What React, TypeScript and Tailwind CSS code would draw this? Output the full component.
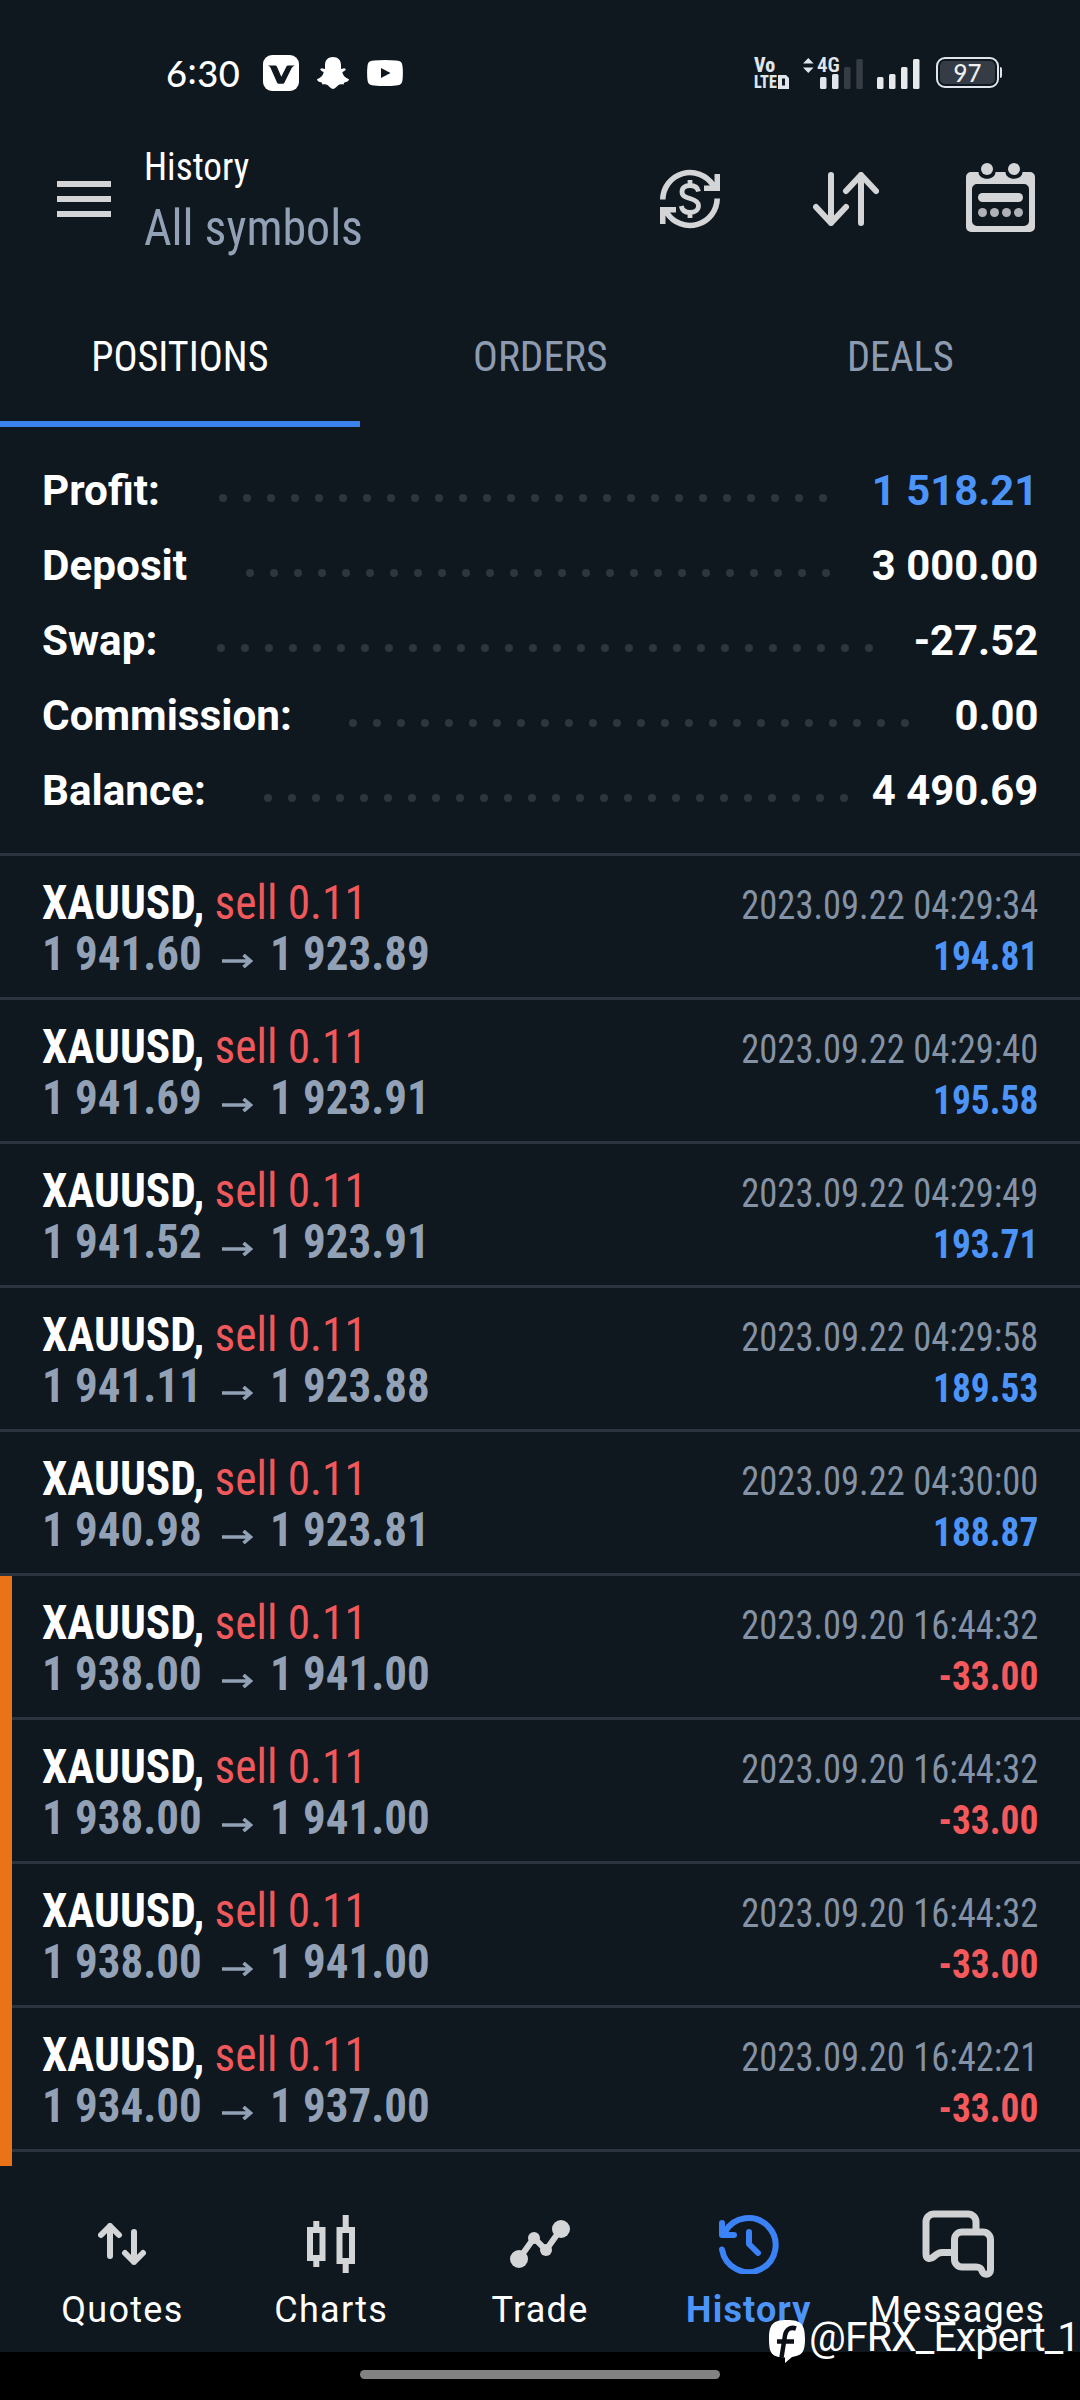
import React from "react";

type Trade = { open: string; close: string; time: string; profit: string };

const summary = [
  { label: "Profit:", value: "1 518.21", dots: 26, labelWidth: "w-[177px]", blue: true },
  { label: "Deposit", value: "3 000.00", dots: 25, labelWidth: "w-[204px]" },
  { label: "Swap:", value: "-27.52", dots: 28, labelWidth: "w-[175px]" },
  { label: "Commission:", value: "0.00", dots: 24, labelWidth: "w-[307px]" },
  { label: "Balance:", value: "4 490.69", dots: 25, labelWidth: "w-[222px]" },
];

const recent: Trade[] = [
  { open: "1 941.60", close: "1 923.89", time: "2023.09.22 04:29:34", profit: "194.81" },
  { open: "1 941.69", close: "1 923.91", time: "2023.09.22 04:29:40", profit: "195.58" },
  { open: "1 941.52", close: "1 923.91", time: "2023.09.22 04:29:49", profit: "193.71" },
  { open: "1 941.11", close: "1 923.88", time: "2023.09.22 04:29:58", profit: "189.53" },
  { open: "1 940.98", close: "1 923.81", time: "2023.09.22 04:30:00", profit: "188.87" },
];

const marked: Trade[] = [
  { open: "1 938.00", close: "1 941.00", time: "2023.09.20 16:44:32", profit: "-33.00" },
  { open: "1 938.00", close: "1 941.00", time: "2023.09.20 16:44:32", profit: "-33.00" },
  { open: "1 938.00", close: "1 941.00", time: "2023.09.20 16:44:32", profit: "-33.00" },
  { open: "1 934.00", close: "1 937.00", time: "2023.09.20 16:42:21", profit: "-33.00" },
];

function StatusBar() {
  return (
    <div className="flex h-[142px] items-center pt-[3px] pl-[166px] text-white">
      <span className="w-[97px] origin-left scale-x-[0.980] font-['Lato'] text-[37px] leading-none font-medium tracking-[0.5px]">
        6<span className="inline-block -translate-y-[3px]">:</span>30
      </span>
      <svg width="36" height="36" viewBox="0 0 36 36">
        <rect width="36" height="36" rx="9" fill="#fff" />
        <path d="M5 10.5h7c1 0 1.500.3 2 1.300l4.300 10 5-10c.5-1 1-1.300 2-1.300H32c-1.500.4-2.500 1.300-3.300 2.600L21.500 27.500c-.4.9-1 1.300-2 1.300h-3.500c-1 0-1.500-.4-2-1.300L7.600 13C7 11.700 6.200 10.900 5 10.500z" fill="#0f171f" />
      </svg>
      <svg className="ml-[18px]" width="32" height="32" viewBox="0 0 32 32" fill="#fff">
        <path d="M16 0c5 0 8 3.200 8 8v4l3.200-.8 1.600.8c0 1.500-1.800 2.200-3.500 3 .6 3.500 3 5.800 6.700 7.200-.2 2.200-2.200 2.800-4.700 3.200l-.8 2.100c-2-.3-3.800-.3-5 .6C19.700 29.600 18 32 16 32s-3.700-2.400-5.500-3.900c-1.200-.9-3-.9-5-.6l-.8-2.100C2.200 25 .2 24.400 0 22.200c3.700-1.400 6.100-3.700 6.700-7.200-1.700-.8-3.500-1.500-3.500-3l1.600-.8 3.200.8V8c0-4.800 3-8 8-8z" />
      </svg>
      <svg className="ml-[18px]" width="36" height="26" viewBox="0 0 36 26">
        <path d="M7 .6Q18-.5 29 .6C34 1 35 2.500 35.500 6Q36.300 13 35.500 20C35 23.500 34 25 29 25.400Q18 26.500 7 25.400C2 25 1 23.500.5 20Q-.3 13 .5 6C1 2.500 2 1 7 .6z" fill="#fff" />
        <path d="M14 8l9.500 5-9.500 5z" fill="#0f171f" />
      </svg>

      <div className="ml-[351px] flex h-[30px] w-[36px] flex-col text-[#dfe5ea]">
        <span className="h-[16px] font-[Roboto] text-[20px] leading-[15px] font-extrabold font-stretch-75%">Vo</span>
        <span className="flex h-[14px] items-start">
          <span className="w-[24px] origin-left scale-x-85 font-[Roboto] text-[19px] leading-[16px] font-extrabold font-stretch-75%">LTE</span>
          <svg className="mt-px shrink-0" width="11" height="14" viewBox="0 0 11 14">
            <path d="M0 0H8L11 3V14H0zM4 3.500V10.500H7V3.500z" fill="currentColor" fillRule="evenodd" />
          </svg>
        </span>
      </div>
      <div className="relative ml-[13px] h-[34px] w-[61px]">
        <svg width="61" height="34" viewBox="0 0 61 34" fill="#dfe5ea">
          <path d="M0 7.500L5.300 2L10.600 7.500zM0 11.500L5.300 17L10.600 11.500z" />
          <rect x="17" y="21" width="6.500" height="12" rx="1.500" />
          <rect x="29" y="18" width="6.500" height="15" rx="1.500" />
          <rect x="41" y="11" width="6.500" height="22" rx="1.500" fill="#353c44" />
          <rect x="53.300" y="3" width="6.500" height="30" rx="1.500" fill="#353c44" />
        </svg>
        <span className="absolute top-0 left-[14px] font-[Roboto] text-[21px] leading-[18px] font-semibold font-stretch-75% text-[#dfe5ea]">4G</span>
      </div>
      <svg className="ml-[13px]" width="44" height="34" viewBox="0 0 44 34" fill="#e6e8ea">
        <rect x="0" y="21" width="6.500" height="12" rx="1.500" />
        <rect x="12" y="18" width="6.500" height="15" rx="1.500" />
        <rect x="24" y="11" width="6.500" height="22" rx="1.500" />
        <rect x="36" y="3" width="6.500" height="30" rx="1.500" />
      </svg>
      <div className="ml-[15px] flex h-[31px] w-[63px] rounded-[9px] border-2 border-[#dfe5ea] p-[2px]">
        <div className="flex flex-1 items-center justify-center rounded-[5px] bg-[#353c46] font-['Lato'] text-[24px] leading-none font-medium text-[#eef0f2]">97</div>
      </div>
      <div className="ml-[1px] h-[11px] w-[2px] rounded-r bg-[#dfe5ea]" />
    </div>
  );
}

function Header() {
  return (
    <header className="flex h-[116px] items-start">
      <div className="mt-[39px] ml-[57px] flex w-[54px] flex-col gap-[9px]">
        <div className="h-[6px] bg-[#d2d4d6]" />
        <div className="h-[6px] bg-[#d2d4d6]" />
        <div className="h-[6px] bg-[#d2d4d6]" />
      </div>
      <div className="ml-[33px] w-[516px] font-stretch-75%">
        <h1 className="h-[56px] origin-left scale-x-[0.955] text-[39px] leading-[50px] font-normal text-white">History</h1>
        <p className="h-[60px] origin-left scale-x-[0.958] text-[50px] leading-[60px] text-[#92a1b5]">All symbols</p>
      </div>
      <svg className="mt-[27px]" width="60" height="60" viewBox="0 0 60 60" fill="none" stroke="#d4d5d6">
        <path d="M2.800 30.500A27.300 27.300 0 0 1 53 16" strokeWidth="5.600" />
        <path d="M57.200 29.500A27.300 27.300 0 0 1 7 44" strokeWidth="5.600" />
        <path d="M60 5v17H44v-5.500h6L54.500 13V5zM0 55V38h16v5.500h-6L5.500 47v8z" fill="#d4d5d6" stroke="none" />
        <path d="M38.500 22.500c-.8-3.800-4-6-8.500-6-5 0-8 2.500-8 6.200 0 4.400 3.500 5.600 8 6.800s8.500 2.700 8.500 7.300c0 4-3.500 6.700-8.500 6.700s-8-2.300-8.700-6.500M30 11v5M30 43.500v5.500" strokeWidth="4.800" />
      </svg>
      <svg className="mt-[30px] ml-[93px]" width="66" height="54" viewBox="0 0 66 54" fill="none" stroke="#d4d5d6" strokeWidth="6" strokeLinecap="round" strokeLinejoin="round">
        <path d="M18 3v48M3 35l15 16L33 35M48 51V3M33 19L48 3l15 16" />
      </svg>
      <svg className="mt-[21px] ml-[87px]" width="69" height="69" viewBox="0 0 69 69" fill="#d4d5d6">
        <path d="M5 9h7.500c0 9 17 9 17 0h10c0 9 17 9 17 0H64a5 5 0 0 1 5 5v50a5 5 0 0 1-5 5H5a5 5 0 0 1-5-5V14a5 5 0 0 1 5-5zM11 21a5 5 0 0 0-5 5v32a5 5 0 0 0 5 5h47a5 5 0 0 0 5-5V26a5 5 0 0 0-5-5z" fillRule="evenodd" />
        <circle cx="21" cy="6" r="6" />
        <circle cx="48" cy="6" r="6" />
        <rect x="12" y="30" width="45" height="9" rx="4.500" />
        <g fill="#aeb2b6">
          <circle cx="16.500" cy="49.500" r="4.500" />
          <circle cx="28.500" cy="49.500" r="4.500" />
          <circle cx="40.500" cy="49.500" r="4.500" />
          <circle cx="52.500" cy="49.500" r="4.500" />
        </g>
      </svg>
    </header>
  );
}

function Tabs() {
  return (
    <nav className="grid h-[169px] grid-cols-3 text-center text-[42px] leading-[50px] font-stretch-75% text-[#8d9bb0]">
      <div className="border-b-[6px] border-[#3b82ec] pt-[74px] text-white">
        <span className="inline-block scale-x-[0.955]">POSITIONS</span>
      </div>
      <div className="pt-[74px]">
        <span className="inline-block scale-x-[0.985]">ORDERS</span>
      </div>
      <div className="pt-[74px]">
        <span className="inline-block scale-x-[0.965]">DEALS</span>
      </div>
    </nav>
  );
}

function Summary() {
  return (
    <section className="border-b-[3px] border-[#2c343f] pt-[26px] pr-[42px] pb-[25px] pl-[42px]">
      {summary.map((s) => (
        <div key={s.label} className="flex h-[75px] items-center text-[42px] leading-[50px] font-bold text-white">
          <span className={s.labelWidth}>
            <span className="inline-block origin-left scale-x-[1.006]">{s.label}</span>
          </span>
          <span className="mt-[15px] flex gap-4">
            {Array.from({ length: s.dots }, (_, i) => (
              <i key={i} className="size-2 rounded-full bg-[#2d353f]" />
            ))}
          </span>
          <span
            className={
              s.blue ? "ml-auto origin-right scale-x-[0.995] text-[#4c94f8]" : "ml-auto origin-right scale-x-[0.995]"
            }
          >
            {s.value}
          </span>
        </div>
      ))}
    </section>
  );
}

function Row({ t }: { t: Trade }) {
  const loss = t.profit.startsWith("-");
  return (
    <div className="flex h-[144px] justify-between border-b-[3px] border-[#2c343f] pr-[42px] font-stretch-75%">
      <div className="pt-[21px] text-[48px] leading-[51px]">
        <div className="origin-left scale-x-[0.944] text-[#f0595c]">
          <b className="text-white">XAUUSD,</b> sell 0.11
        </div>
        <div className="flex items-center font-bold text-[#92a1b5]">
          <span className="w-[180px] origin-left scale-x-[0.937]">{t.open}</span>
          <svg className="mt-[14px] mr-[17px]" width="31" height="14" viewBox="0 0 31 14" fill="none" stroke="currentColor" strokeWidth="3.600">
            <path d="M0 7h29M21.500 1l7 6L21.500 13" />
          </svg>
          <span className="origin-left scale-x-[0.937]">{t.close}</span>
        </div>
      </div>
      <div className="pt-[24px] text-right text-[40px] leading-[51px]">
        <div className="origin-right scale-x-[0.913] text-[#8492a5]">{t.time}</div>
        <div
          className={
            loss
              ? "origin-right scale-x-[0.935] font-bold text-[#f4595c]"
              : "origin-right scale-x-[0.935] font-bold text-[#4c94f8]"
          }
        >
          {t.profit}
        </div>
      </div>
    </div>
  );
}

function NavItem({ label, active, children }: { label: string; active?: boolean; children: React.ReactNode }) {
  return (
    <div className="flex flex-col items-center">
      <div className="flex h-[72px] items-center justify-center">{children}</div>
      <span
        className={
          active
            ? "mt-[10px] text-[36px] leading-[40px] font-bold tracking-[1.2px] text-[#4c94f8] font-stretch-90%"
            : "mt-[10px] text-[36px] leading-[40px] tracking-[1.3px] text-white font-stretch-90%"
        }
      >
        {label}
      </span>
    </div>
  );
}

function BottomNav() {
  return (
    <nav className="grid h-[186px] grid-cols-5 px-[18px] pt-[42px]">
      <NavItem label="Quotes">
        <svg width="48" height="42" viewBox="0 0 48 42" fill="none" stroke="#d4d5d6" strokeWidth="6" strokeLinecap="round" strokeLinejoin="round">
          <path d="M12 33V3M3 12l9-9 9 9M36 9v30M27 30l9 9 9-9" />
        </svg>
      </NavItem>
      <NavItem label="Charts">
        <svg width="48" height="58" viewBox="0 0 48 58" fill="none" stroke="#d4d5d6" strokeWidth="6">
          <path d="M3 15h12.500v28H3zM9.300 6v8M9.300 44v8M32.500 15H45v31H32.500zM38.700 0v14M38.700 46v12" />
        </svg>
      </NavItem>
      <NavItem label="Trade">
        <svg width="60" height="48" viewBox="0 0 60 48" fill="#d4d5d6">
          <path d="M9 39L24 18l12 12L51 9" fill="none" stroke="#d4d5d6" strokeWidth="6" />
          <circle cx="9" cy="39" r="9" />
          <circle cx="24" cy="18" r="6" />
          <circle cx="36" cy="30" r="6" />
          <circle cx="51" cy="9" r="9" />
        </svg>
      </NavItem>
      <NavItem label="History" active>
        <svg width="60" height="60" viewBox="0 0 60 60" fill="none" stroke="#3b82f6" strokeWidth="6" strokeLinecap="round" strokeLinejoin="round">
          <path d="M3 35.500A27 27 0 1 0 6 18M3 9v12h12M30 18v12l9 9M4.500 20.500L9 13.500" />
        </svg>
      </NavItem>
      <NavItem label="Messages">
        <svg width="72" height="68" viewBox="0 0 72 68" fill="none" stroke="#cfd1d2" strokeWidth="7" strokeLinejoin="round">
          <path d="M54 19V12a8 8 0 0 0-8-8H12a8 8 0 0 0-8 8v32c0 5 4 6 8 2.500 3-2.500 4-4 8-4h11" />
          <path d="M40 22h21a7.500 7.500 0 0 1 7.500 7.500V60c0 5.500-7 5.500-8.500 1-1-3.500-3-4-6-4H40a7.500 7.500 0 0 1-7.500-7.500v-20A7.500 7.500 0 0 1 40 22z" />
        </svg>
      </NavItem>
    </nav>
  );
}

export default function App() {
  return (
    <div className="relative flex h-[2400px] w-[1080px] flex-col overflow-hidden bg-[#0f171f] font-[Roboto,sans-serif] whitespace-nowrap">
      <StatusBar />
      <Header />
      <Tabs />
      <Summary />
      <section>
        {recent.map((t) => (
          <div key={t.time} className="[&>div]:pl-[42px]">
            <Row t={t} />
          </div>
        ))}
      </section>
      <section className="flex h-[590px]">
        <div className="w-3 bg-[#ea7317]" />
        <div className="flex-1">
          {marked.map((t, i) => (
            <div key={i} className="[&>div]:pl-[30px]">
              <Row t={t} />
            </div>
          ))}
        </div>
      </section>
      <BottomNav />
      <div className="h-[48px] bg-black pt-[18px]">
        <div className="mx-auto h-[9px] w-[360px] rounded-full bg-[#828282]" />
      </div>

      <div className="absolute top-[2314px] left-[768px] flex items-start text-white">
        <svg className="mt-[6px]" width="38" height="44" viewBox="0 0 38 44">
          <path d="M19 0C33 0 37 4 37 19S33 35 24 37L17 43l0-5.500C4 37 1 34 1 19S5 0 19 0z" fill="#fff" />
          <path d="M28 8.500c-6-2-10 1-11 7l-3.500 22M9 21.500h17" stroke="#0b1016" strokeWidth="4.500" fill="none" />
        </svg>
        <span className="ml-[3px] text-[41px] leading-[46px] font-[370] tracking-[-0.9px] font-stretch-90%">
          @FRX_Expert<span className="tracking-[-6px]">_</span>1
        </span>
      </div>
    </div>
  );
}
